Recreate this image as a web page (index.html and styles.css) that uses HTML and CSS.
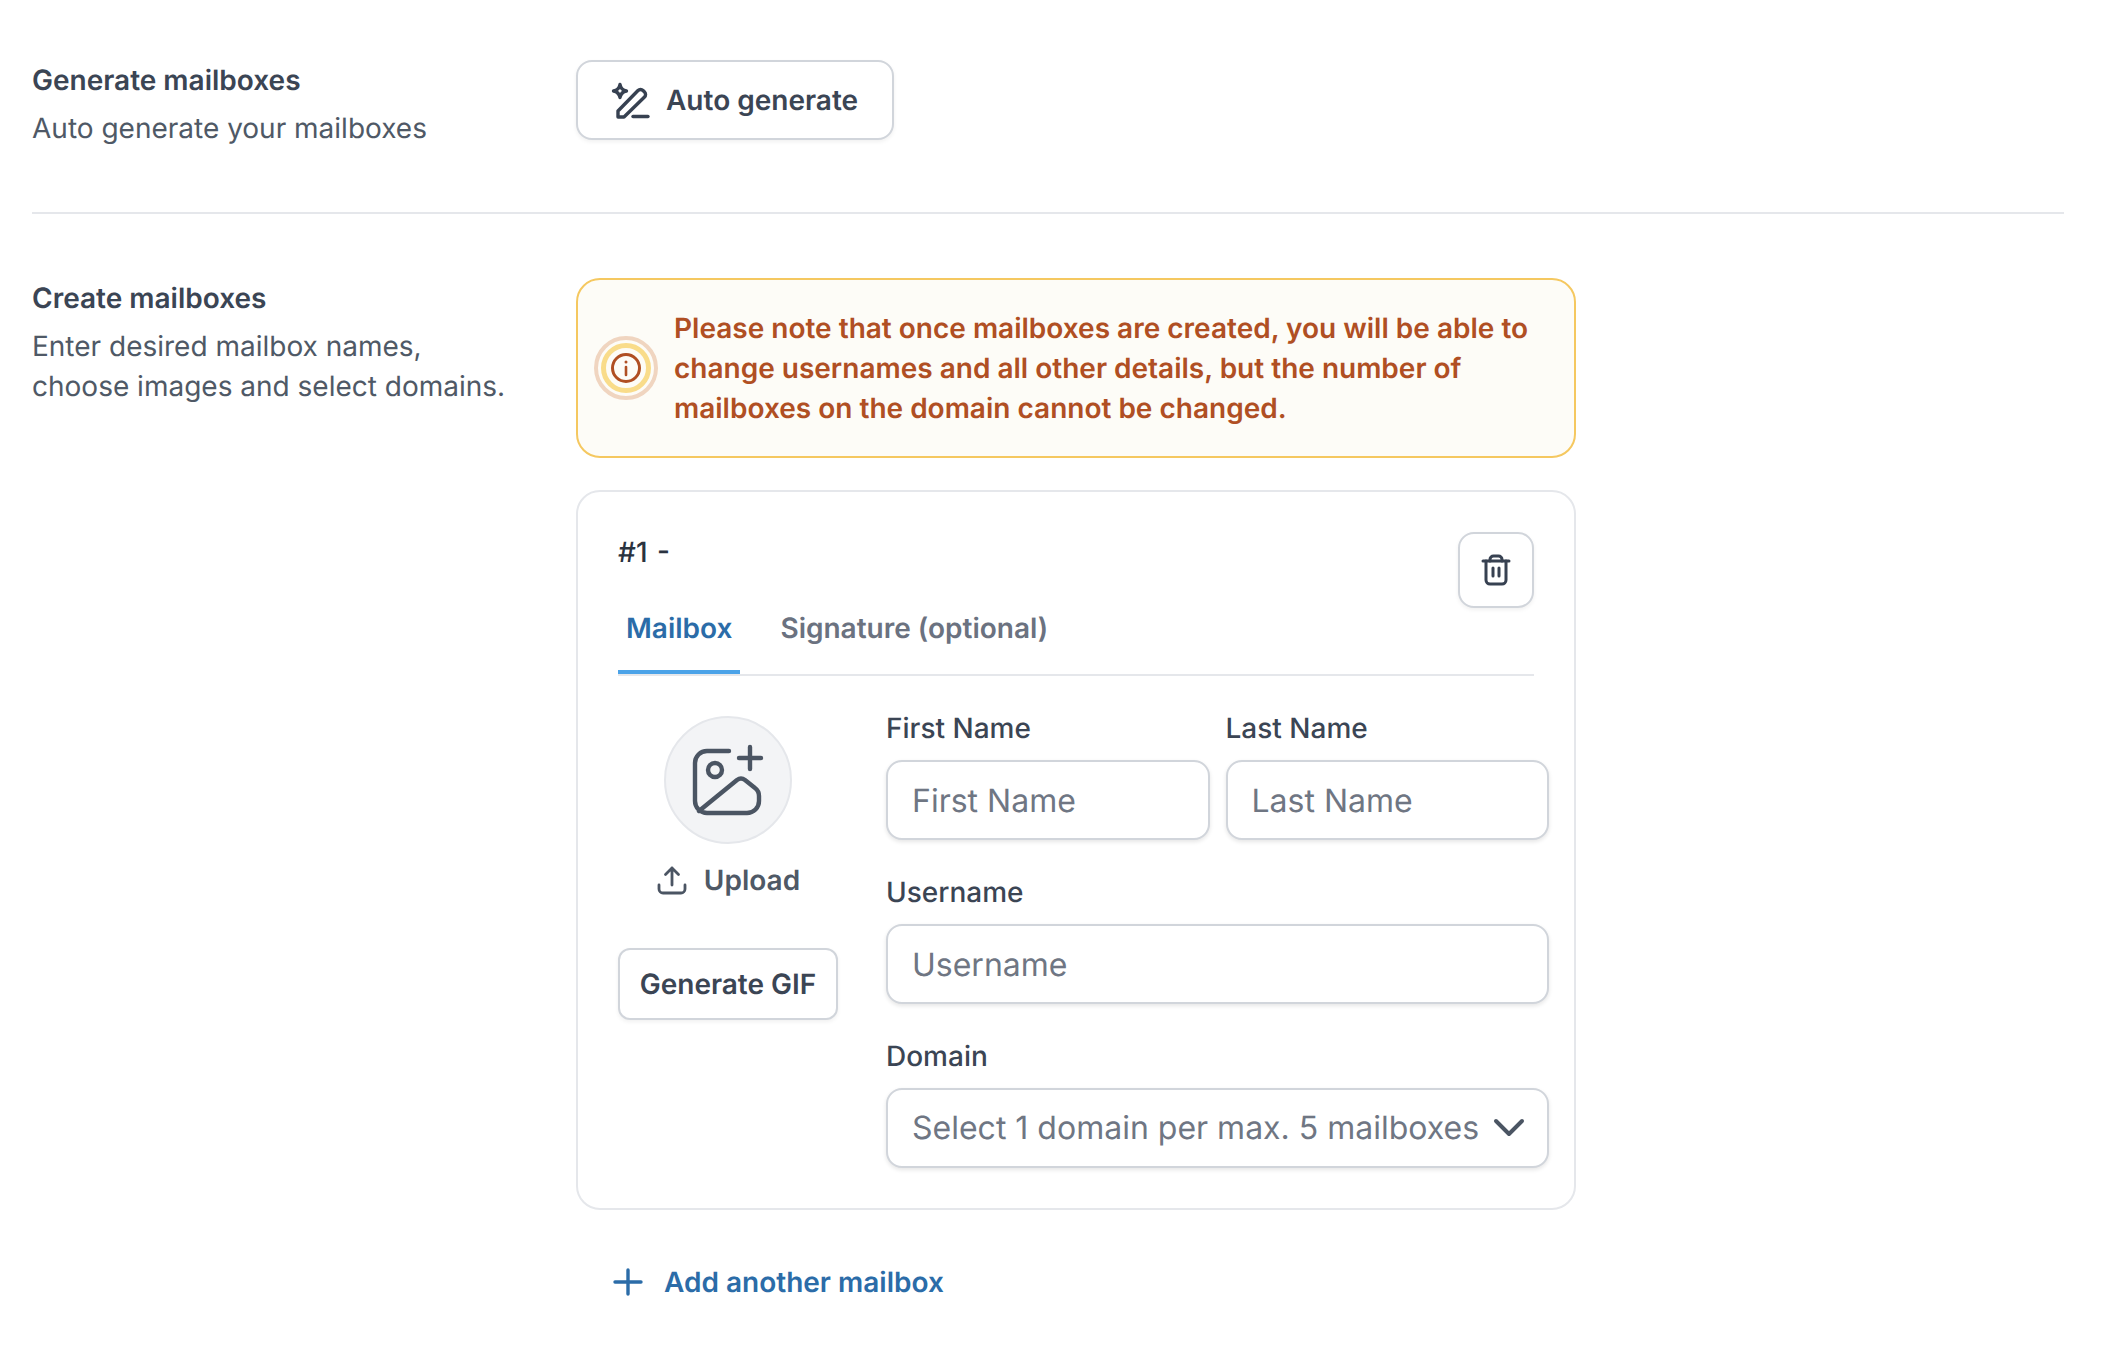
FILE: index.html
```html
<!DOCTYPE html>
<html lang="en">
<head>
<meta charset="utf-8">
<title>Create mailboxes</title>
<link rel="stylesheet" href="styles.css">
</head>
<body>
<main class="page">
  <section class="section section-first">
    <div class="intro">
      <h2 class="intro-title">Generate mailboxes</h2>
      <p class="intro-text">Auto generate your mailboxes</p>
    </div>
    <div class="content">
      <button class="btn btn-auto" type="button">
        <svg class="icon-40" viewBox="0 0 40 40" fill="none" stroke="#374151" stroke-width="3.400" stroke-linecap="round" stroke-linejoin="round">
          <path d="M9 4.500 Q10 10 15.500 11 Q10 12 9 17.500 Q8 12 2.500 11 Q8 10 9 4.500 Z"/>
          <path d="M27 10.5 a3.5 3.5 0 0 1 5 0 l1.5 1.5 a3.5 3.5 0 0 1 0 5 L13 37 H7 v-6 Z"/>
          <path d="M22 36.500 H37"/>
        </svg>
        <span>Auto generate</span>
      </button>
    </div>
  </section>

  <section class="section section-second">
    <div class="intro">
      <h2 class="intro-title">Create mailboxes</h2>
      <p class="intro-text">Enter desired mailbox names,<br>choose images and select domains.</p>
    </div>
    <div class="content">
      <div class="alert">
        <svg class="alert-icon" viewBox="0 0 64 64" fill="none">
          <circle cx="32" cy="32" r="30" stroke="#F0D5C0" stroke-width="4"/>
          <circle cx="32" cy="32" r="22.500" stroke="#F9DC8A" stroke-width="5"/>
          <circle cx="32" cy="32" r="13.500" stroke="#B04F23" stroke-width="3"/>
          <path d="M32 31 V39" stroke="#B04F23" stroke-width="2.600" stroke-linecap="round"/>
          <circle cx="32" cy="26" r="1.500" fill="#B04F23"/>
        </svg>
        <p class="alert-text">Please note that once mailboxes are created, you will be able to change usernames and all other details, but the number of mailboxes on the domain cannot be changed.</p>
      </div>

      <div class="card">
        <div class="card-head">
          <span class="card-index">#1 -</span>
          <button class="btn-trash" type="button" aria-label="Delete">
            <svg class="icon-32" viewBox="0 0 32 32" fill="none" stroke="#374151" stroke-width="3" stroke-linecap="round" stroke-linejoin="round">
              <path d="M3 7 H29"/>
              <path d="M10 7 V5.500 a3.500 3.500 0 0 1 3.500 -3.500 h5 a3.500 3.500 0 0 1 3.500 3.500 V7"/>
              <path d="M6 7 V26 a4 4 0 0 0 4 4 h12 a4 4 0 0 0 4 -4 V7"/>
              <path d="M13 14 v8 M19 14 v8"/>
            </svg>
          </button>
        </div>
        <nav class="tabs">
          <span class="tab tab-active">Mailbox</span>
          <span class="tab">Signature (optional)</span>
        </nav>
        <div class="panel">
          <div class="media">
            <div class="avatar">
              <svg class="icon-80" viewBox="0 0 80 80" fill="none" stroke="#4B5563" stroke-width="4.400" stroke-linecap="round" stroke-linejoin="round">
                <path d="M41 11 H19 a12 12 0 0 0 -12 12 V61 a12 12 0 0 0 12 12 H59 a12 12 0 0 0 12 -12 V56 q0 -5 -4 -8 L57 40 q-4 -3 -8 0 L11 71"/>
                <circle cx="27" cy="30" r="7"/>
                <path d="M51 18 H73 M62 7 V29"/>
              </svg>
            </div>
            <div class="upload">
              <svg class="icon-32" viewBox="0 0 32 32" fill="none" stroke="#4B5563" stroke-width="2.800" stroke-linecap="round" stroke-linejoin="round">
                <path d="M3 21 v4 a4 4 0 0 0 4 4 H25 a4 4 0 0 0 4 -4 v-4"/>
                <path d="M16 21 V4 M9.500 10.500 L16 4 L22.500 10.500"/>
              </svg>
              <span>Upload</span>
            </div>
            <button class="btn btn-gif" type="button">Generate GIF</button>
          </div>
          <form class="fields">
            <div class="field-row">
              <label class="field">
                <span class="field-label">First Name</span>
                <input class="input" type="text" placeholder="First Name">
              </label>
              <label class="field">
                <span class="field-label">Last Name</span>
                <input class="input" type="text" placeholder="Last Name">
              </label>
            </div>
            <label class="field">
              <span class="field-label">Username</span>
              <input class="input" type="text" placeholder="Username">
            </label>
            <div class="field">
              <span class="field-label">Domain</span>
              <div class="select">
                <span>Select 1 domain per max. 5 mailboxes</span>
                <svg class="chevron" viewBox="0 0 32 20" fill="none" stroke="#4B5563" stroke-width="4" stroke-linecap="round" stroke-linejoin="round">
                  <path d="M3 3 L16 16 L29 3"/>
                </svg>
              </div>
            </div>
          </form>
        </div>
      </div>

      <div class="add-row">
        <svg class="icon-32" viewBox="0 0 32 32" fill="none" stroke="#2B6CA8" stroke-width="3.400" stroke-linecap="round">
          <path d="M16 4 V28 M3 16 H29"/>
        </svg>
        <span>Add another mailbox</span>
      </div>
    </div>
  </section>
</main>
</body>
</html>
```

FILE: styles.css
```css
* {
  box-sizing: border-box;
}

html,
body {
  margin: 0;
  background: #fff;
}

body {
  font-family: Inter, "Liberation Sans", sans-serif;
  font-size: 28px;
  line-height: 40px;
  color: #374151;
  text-rendering: geometricPrecision;
}

.page {
  padding: 60px 64px 0 32px;
  height: 1354px;
  overflow: hidden;
}

.section {
  display: flex;
}

.section-first {
  padding-bottom: 64px;
  border-bottom: 2px solid #E5E7EB;
}

.section-second {
  padding-top: 64px;
}

.intro {
  width: 544px;
  flex: none;
}

.intro-title {
  margin: 0 0 8px;
  font-size: 28px;
  line-height: 40px;
  font-weight: 600;
  color: #3B4554;
}

.intro-text {
  margin: 0;
  font-size: 28px;
  line-height: 40px;
  color: #4F5966;
}

.content {
  width: 1000px;
  flex: none;
}

.btn {
  display: flex;
  align-items: center;
  justify-content: center;
  background: #fff;
  border: 2px solid #D1D5DB;
  font-family: inherit;
  font-weight: 600;
  color: #3B4554;
  text-rendering: geometricPrecision;
  box-shadow: 0 2px 4px rgba(0, 0, 0, 0.06);
}

.btn-auto {
  gap: 15px;
  height: 80px;
  padding: 0 34px 0 33px;
  border-radius: 16px;
  font-size: 28px;
  line-height: 40px;
}

.icon-40 {
  width: 40px;
  height: 40px;
  flex: none;
}

.icon-32 {
  width: 32px;
  height: 32px;
  flex: none;
}

.icon-80 {
  width: 80px;
  height: 80px;
  flex: none;
}

.alert {
  display: flex;
  align-items: center;
  gap: 16px;
  padding: 28px 32px 28px 16px;
  background: #FDFCF7;
  border: 2px solid #F5C860;
  border-radius: 24px;
}

.alert-icon {
  width: 64px;
  height: 64px;
  flex: none;
}

.alert-text {
  margin: 0;
  font-size: 28px;
  line-height: 40px;
  font-weight: 600;
  color: #B04F23;
}

.card {
  margin-top: 32px;
  padding: 40px;
  border: 2px solid #E5E7EB;
  border-radius: 24px;
}

.card-head {
  display: flex;
  justify-content: space-between;
  align-items: flex-start;
  height: 76px;
}

.card-index {
  font-weight: 500;
  color: #2A3340;
  word-spacing: 2px;
}

.btn-trash {
  display: flex;
  align-items: center;
  justify-content: center;
  width: 76px;
  height: 76px;
  padding: 0;
  background: #fff;
  border: 2px solid #D1D5DB;
  border-radius: 16px;
  box-shadow: 0 2px 4px rgba(0, 0, 0, 0.06);
}

.tabs {
  display: flex;
  gap: 32px;
  border-bottom: 2px solid #E5E7EB;
}

.tab {
  padding: 0 8px 22px;
  border-bottom: 4px solid transparent;
  font-weight: 600;
  color: #6B7280;
}

.tab-active {
  color: #2B6CA8;
  border-bottom-color: #4BA3E8;
}

.panel {
  display: flex;
  gap: 48px;
  padding-top: 32px;
}

.media {
  width: 220px;
  flex: none;
  display: flex;
  flex-direction: column;
  align-items: center;
  padding-top: 8px;
}

.avatar {
  width: 128px;
  height: 128px;
  display: flex;
  align-items: center;
  justify-content: center;
  background: #F3F4F6;
  border: 2px solid #E5E7EB;
  border-radius: 50%;
}

.upload {
  display: flex;
  align-items: center;
  gap: 16px;
  margin-top: 16px;
  font-weight: 600;
  color: #4F5966;
}

.btn-gif {
  width: 100%;
  height: 72px;
  margin-top: 48px;
  border-radius: 12px;
  font-size: 28px;
  line-height: 40px;
}

.fields {
  width: 663px;
  flex: none;
  display: flex;
  flex-direction: column;
  gap: 32px;
}

.field-row {
  display: flex;
  gap: 16px;
}

.field {
  flex: 1;
  min-width: 0;
  display: flex;
  flex-direction: column;
  gap: 12px;
}

.field-label {
  font-weight: 500;
  color: #3B4554;
}

.input,
.select {
  width: 100%;
  height: 80px;
  padding: 0 24px;
  background: #fff;
  border: 2px solid #D1D5DB;
  border-radius: 16px;
  box-shadow: 0 2px 4px rgba(0, 0, 0, 0.1);
  font-family: inherit;
  font-size: 32px;
  color: #6F7683;
  text-rendering: geometricPrecision;
}

.input::placeholder {
  color: #6F7683;
  opacity: 1;
}

.select {
  display: flex;
  align-items: center;
  justify-content: space-between;
  padding-right: 22px;
  white-space: nowrap;
}

.chevron {
  width: 32px;
  height: 20px;
  flex: none;
}

.add-row {
  display: flex;
  align-items: center;
  gap: 20px;
  margin-top: 52px;
  padding-left: 36px;
  font-weight: 600;
  color: #2B6CA8;
}
```
